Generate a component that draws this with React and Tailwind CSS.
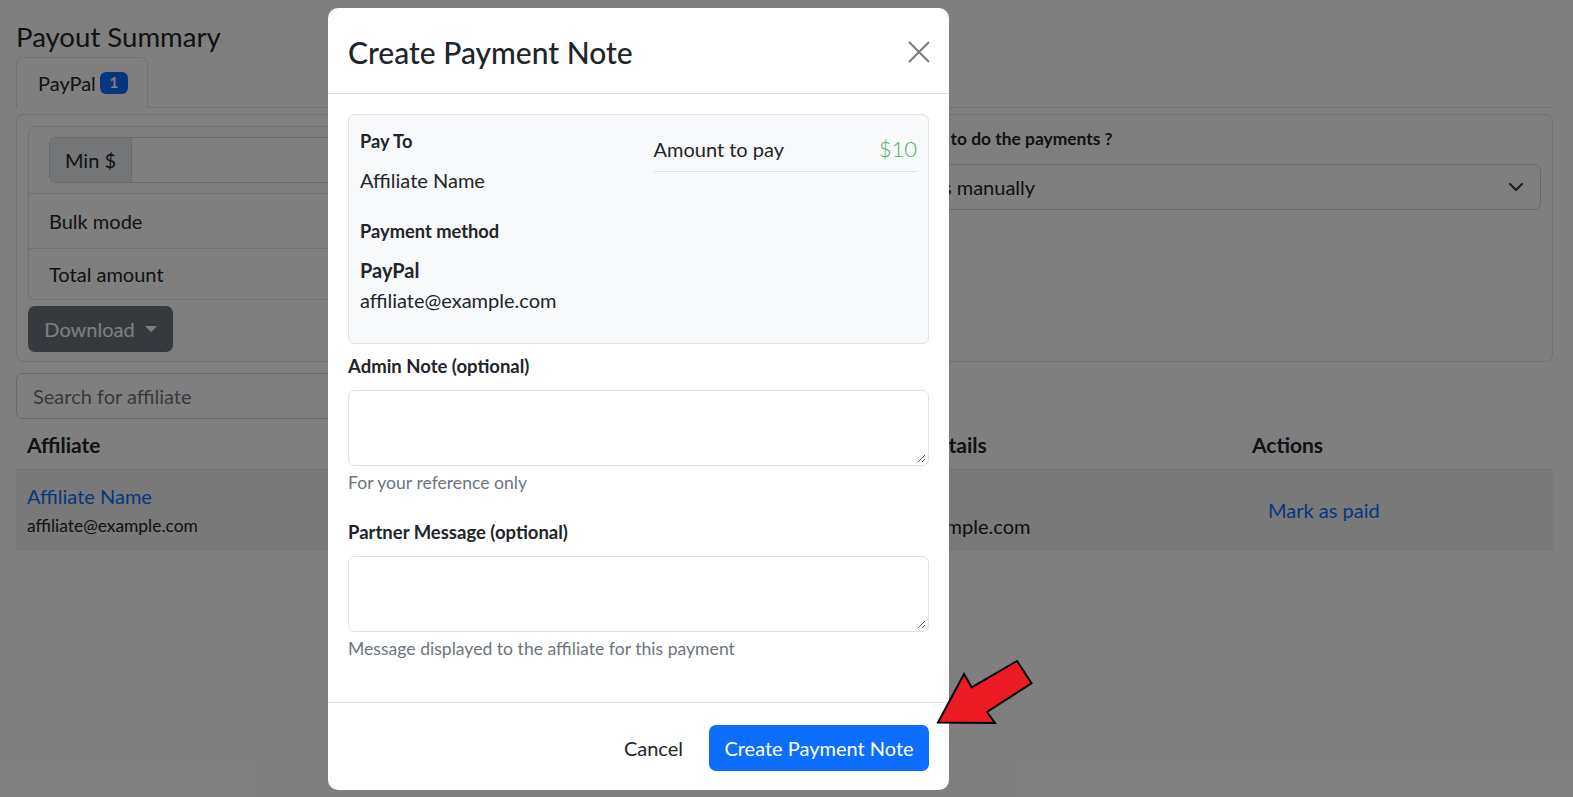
export default function App() {
  return (
    <div className="relative h-[797px] w-full overflow-hidden bg-white font-['Lato',sans-serif] text-[#212529]">
      <Page />
      <div className="absolute inset-0 bg-black/50" />
      <Modal />
      <Arrow />
    </div>
  );
}

function Page() {
  return (
    <div className="pl-[16px] pr-[20px] pt-[18px]">
      <h3 className="text-[27.6px] leading-[38px] font-normal">Payout Summary</h3>
      <div className="mt-px flex border-b border-[#dee2e6]">
        <div className="-mb-px flex h-[51px] items-center gap-[4px] rounded-t-[7px] border border-[#dee2e6] border-b-white bg-white pl-[21px] pr-[19px] text-[20px]">
          <span>PayPal</span>
          <span className="flex h-[22px] w-[28px] items-center justify-center rounded-[6px] bg-[#0d6efd] text-[15px] font-bold text-white">1</span>
        </div>
      </div>

      <div className="mt-[6px] grid h-[248px] grid-cols-2 gap-[20px] rounded-[7px] border border-[#dee2e6] p-[11px]">
        <div>
          <div className="rounded-[7px] border border-[#dee2e6]">
            <div className="flex h-[66px] items-center px-[20px]">
              <div className="flex h-[46px] w-full rounded-[7px] border border-[#ced4da]">
                <div className="flex w-[82px] items-center justify-center border-r border-[#ced4da] bg-[#e9ecef] text-[20px]">Min $</div>
                <div className="flex-1" />
              </div>
            </div>
            <div className="flex h-[55px] items-center justify-between border-t border-[#dee2e6] px-[20px] text-[20px]">
              <span>Bulk mode</span>
              <span>Off</span>
            </div>
            <div className="flex h-[51px] items-center justify-between border-t border-[#dee2e6] px-[20px] text-[20px]">
              <span>Total amount</span>
              <span>$10</span>
            </div>
          </div>
          <button className="mt-[6px] flex h-[46px] w-[145px] items-center justify-center gap-[10px] rounded-[7px] bg-[#6c757d] text-[20px] text-white">
            Download
            <span className="h-0 w-0 border-x-[6px] border-t-[6px] border-x-transparent border-t-white" />
          </button>
        </div>
        <div>
          <div className="h-[26px] text-[17.4px] leading-[26px] font-bold">How would you like to do the payments ?</div>
          <div className="mt-[12px] flex h-[46px] items-center justify-between rounded-[7px] border border-[#ced4da] pl-[15px] pr-[16px] text-[20px]">
            <span>Do all payments manually</span>
            <svg width="16" height="16" viewBox="0 0 16 16" fill="none" stroke="#343a40" strokeWidth="2" strokeLinecap="round" strokeLinejoin="round">
              <path d="M2 5l6 6 6-6" />
            </svg>
          </div>
        </div>
      </div>

      <div className="mt-[11px] flex h-[46px] w-[560px] items-center rounded-[7px] border border-[#ced4da] px-[16px] text-[20px] text-[#6c757d]">
        Search for affiliate
      </div>

      <div className="mt-[3px] grid grid-cols-[417px_390px_418px_312px] border-b border-[#dee2e6] text-[21px] font-bold leading-[26px]">
        <div className="px-[11px] pt-[10px] pb-[11px]">Affiliate</div>
        <div className="px-[11px] pt-[10px] pb-[11px]">Amount</div>
        <div className="px-[11px] pt-[10px] pb-[11px]">Payment Details</div>
        <div className="px-[11px] pt-[10px] pb-[11px]">Actions</div>
      </div>
      <div className="grid h-[80px] grid-cols-[417px_390px_418px_312px] border-b border-[#dee2e6] bg-black/5">
        <div className="px-[11px] pt-[11px]">
          <div className="text-[20px] leading-[30px] text-[#0d6efd]">Affiliate Name</div>
          <div className="text-[17.4px] leading-[30px]">affiliate@example.com</div>
        </div>
        <div className="px-[11px] pt-[11px] text-[20px] leading-[30px]">$10</div>
        <div className="px-[11px] pt-[11px]">
          <div className="text-[20px] leading-[30px]">PayPal</div>
          <div className="text-[20px] leading-[30px]">affiliate@example.com</div>
        </div>
        <div className="flex items-center px-[11px]">
          <span className="px-[16px] text-[20px] text-[#0d6efd]">Mark as paid</span>
        </div>
      </div>
    </div>
  );
}

function Modal() {
  return (
    <div className="absolute left-[328px] top-[8px] flex h-[782px] w-[621px] flex-col rounded-[10px] bg-white">
      <div className="flex h-[86px] items-center justify-between border-b border-[#dee2e6] px-[20px] pt-[2px]">
        <h5 className="text-[30px] font-medium leading-none">Create Payment Note</h5>
        <svg width="22" height="22" viewBox="0 0 22 22" className="-mr-[1px]" stroke="#7b7b7b" strokeWidth="2">
          <path d="M1 1L21 21M21 1L1 21" />
        </svg>
      </div>

      <div className="flex-1 px-[20px] pt-[20px]">
        <div className="grid h-[230px] grid-cols-2 gap-x-[30px] rounded-[7px] border border-[#dee2e6] bg-[#f8f9fa] p-[11px]">
          <div>
            <div className="h-[30px] text-[18.3px] font-bold leading-[30px]">Pay To</div>
            <div className="mt-[9px] h-[30px] text-[20px] leading-[30px]">Affiliate Name</div>
            <div className="mt-[21px] h-[30px] text-[18.3px] font-bold leading-[30px]">Payment method</div>
            <div className="mt-[9px] h-[30px] text-[20px] font-bold leading-[30px]">PayPal</div>
            <div className="h-[30px] text-[20px] leading-[30px]">affiliate@example.com</div>
          </div>
          <div>
            <div className="flex h-[46px] items-center justify-between border-b border-[#dee2e6] pt-[1px]">
              <span className="text-[20px] leading-[30px]">Amount to pay</span>
              <span className="text-[22px] font-light leading-[30px] text-[#45b45f]">$10</span>
            </div>
          </div>
        </div>

        <div className="mt-[7px] h-[30px] text-[18.5px] font-bold leading-[30px]">Admin Note (optional)</div>
        <div className="relative mt-[9px] h-[76px] rounded-[7px] border border-[#dee2e6]">
          <Grip />
        </div>
        <div className="mt-[5px] h-[24px] text-[17.6px] leading-[24px] text-[#6c757d]">For your reference only</div>

        <div className="mt-[22px] h-[30px] text-[18.5px] font-bold leading-[30px]">Partner Message (optional)</div>
        <div className="relative mt-[9px] h-[76px] rounded-[7px] border border-[#dee2e6]">
          <Grip />
        </div>
        <div className="mt-[5px] h-[24px] text-[17.6px] leading-[24px] text-[#6c757d]">Message displayed to the affiliate for this payment</div>
      </div>

      <div className="flex h-[88px] items-center justify-end border-t border-[#dee2e6] px-[20px] pt-[2px]">
        <button className="mr-[11px] px-[15px] text-[20px] text-[#212529]">Cancel</button>
        <button className="flex h-[46px] w-[220px] items-center justify-center rounded-[7px] bg-[#0d6efd] text-[20px] text-white">
          Create Payment Note
        </button>
      </div>
    </div>
  );
}

function Grip() {
  return (
    <svg width="10" height="10" viewBox="0 0 10 10" className="absolute bottom-[2px] right-[2px]" stroke="#555" strokeWidth="1">
      <path d="M9 2L2 9M9 6L6 9" />
    </svg>
  );
}

function Arrow() {
  return (
    <svg width="110" height="80" viewBox="0 0 110 80" className="absolute left-[930px] top-[650px]">
      <polygon
        points="8,72.5 34,24 41.7,37.3 87,11 101.5,33.3 57,62 65,73"
        fill="#ed1c24"
        stroke="#000"
        strokeWidth="2"
        strokeLinejoin="miter"
      />
    </svg>
  );
}
